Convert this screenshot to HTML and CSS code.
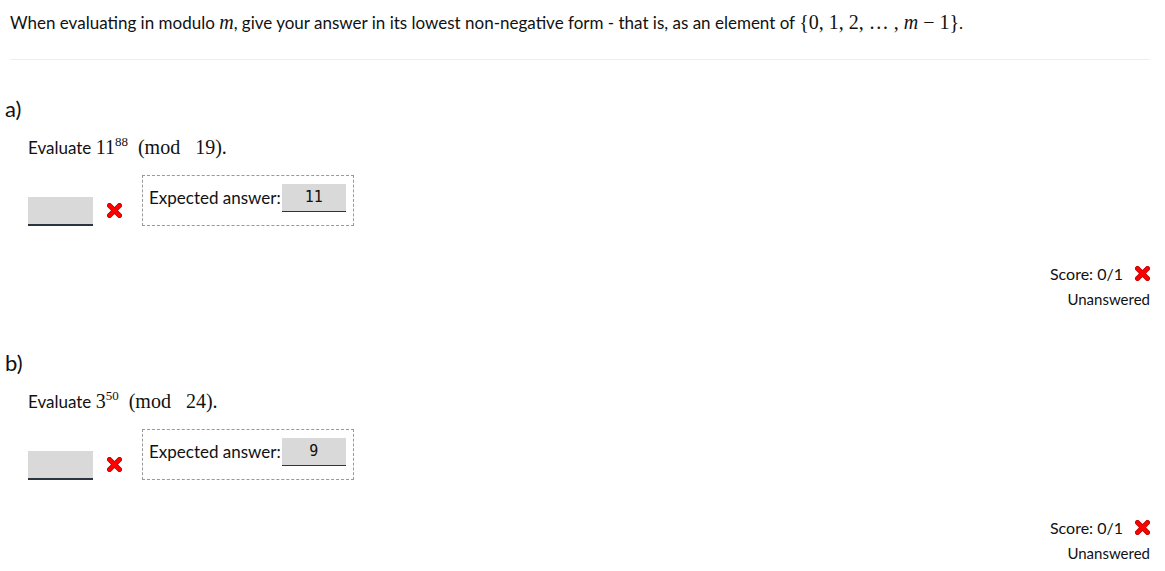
FILE: index.html
```html
<!DOCTYPE html>
<html lang="en">
<head>
    <meta charset="UTF-8">
    <title>Modular exponentiation</title>
    <link rel="stylesheet" href="styles.css">
</head>
<body>
    <div class="statement">
        When evaluating in modulo <span class="math"><i>m</i></span>, give your answer in its lowest non-negative form - that is, as an element of <span class="math">{0, 1, 2, &hellip; , <i>m</i> &minus; 1}</span>.
    </div>
    <hr class="rule">

    <div class="part">
        <h2 class="part-name">a)</h2>
        <p class="prompt">Evaluate <span class="math">11<sup>88</sup>&nbsp;&nbsp;(mod&nbsp;&nbsp;&nbsp;19).</span></p>
        <div class="answer-row">
            <span class="answer-input"></span>
            <span class="cross"><svg width="15" height="15" viewBox="0 0 15 15"><path d="M2.5 2.5 L12.5 12.5 M12.5 2.5 L2.5 12.5" stroke="#b00" stroke-width="5" stroke-linecap="round"/><path d="M2.5 2.5 L12.5 12.5 M12.5 2.5 L2.5 12.5" stroke="#f00" stroke-width="3.4" stroke-linecap="round"/></svg></span>
            <div class="expected">
                <span class="expected-label">Expected answer:</span>
                <span class="expected-value">11</span>
            </div>
        </div>
        <div class="score">
            <div class="score-line">Score: 0/1 <svg width="15" height="15" viewBox="0 0 15 15"><path d="M2.5 2.5 L12.5 12.5 M12.5 2.5 L2.5 12.5" stroke="#b00" stroke-width="5" stroke-linecap="round"/><path d="M2.5 2.5 L12.5 12.5 M12.5 2.5 L2.5 12.5" stroke="#f00" stroke-width="3.4" stroke-linecap="round"/></svg></div>
            <div class="score-status">Unanswered</div>
        </div>
    </div>

    <div class="part">
        <h2 class="part-name">b)</h2>
        <p class="prompt">Evaluate <span class="math">3<sup>50</sup>&nbsp;&nbsp;(mod&nbsp;&nbsp;&nbsp;24).</span></p>
        <div class="answer-row">
            <span class="answer-input"></span>
            <span class="cross"><svg width="15" height="15" viewBox="0 0 15 15"><path d="M2.5 2.5 L12.5 12.5 M12.5 2.5 L2.5 12.5" stroke="#b00" stroke-width="5" stroke-linecap="round"/><path d="M2.5 2.5 L12.5 12.5 M12.5 2.5 L2.5 12.5" stroke="#f00" stroke-width="3.4" stroke-linecap="round"/></svg></span>
            <div class="expected">
                <span class="expected-label">Expected answer:</span>
                <span class="expected-value">9</span>
            </div>
        </div>
        <div class="score">
            <div class="score-line">Score: 0/1 <svg width="15" height="15" viewBox="0 0 15 15"><path d="M2.5 2.5 L12.5 12.5 M12.5 2.5 L2.5 12.5" stroke="#b00" stroke-width="5" stroke-linecap="round"/><path d="M2.5 2.5 L12.5 12.5 M12.5 2.5 L2.5 12.5" stroke="#f00" stroke-width="3.4" stroke-linecap="round"/></svg></div>
            <div class="score-status">Unanswered</div>
        </div>
    </div>
</body>
</html>
```

FILE: styles.css
```css
body {
    margin: 0;
    padding: 0 15px 0 10px;
    font-family: 'Lato', sans-serif;
    font-size: 17px;
    color: #111;
    background-color: #fff;
}

.math {
    font-family: 'Liberation Serif', serif;
    font-size: 20px;
}

.math sup {
    font-size: 13px;
}

.statement {
    padding-top: 10px;
    line-height: 24px;
}

.rule {
    border: none;
    border-top: 1px solid #eee;
    margin: 24px 0 0 0;
}

.part {
    height: 254px;
}

.part-name {
    margin: 0;
    padding-top: 36px;
    margin-left: -5px;
    font-size: 22px;
    font-weight: normal;
    line-height: 26px;
}

.prompt {
    margin: 8px 0 0 18px;
    line-height: 24px;
}

.answer-row {
    display: flex;
    align-items: flex-end;
    margin: 15px 0 0 18px;
}

.answer-input {
    width: 65px;
    height: 27px;
    background-color: #d9d9d9;
    border-bottom: 2px solid #2b3540;
}

.cross {
    margin: 0 20px 8px 14px;
    display: flex;
}

.expected {
    display: flex;
    align-items: center;
    border: 1px dashed #999;
    padding: 8px 7px 13px 6px;
}

.expected-value {
    width: 64px;
    height: 27px;
    line-height: 27px;
    margin-left: 1px;
    text-align: center;
    font-family: 'DejaVu Sans Mono', monospace;
    font-size: 15px;
    background-color: #d9d9d9;
    border-bottom: 1px solid #2b3540;
}

.score {
    margin-top: 36px;
    text-align: right;
    font-size: 15px;
}

.score-line {
    display: flex;
    justify-content: flex-end;
    align-items: center;
    gap: 12px;
    font-size: 16px;
    line-height: 24px;
}

.score-status {
    line-height: 26px;
}
```
